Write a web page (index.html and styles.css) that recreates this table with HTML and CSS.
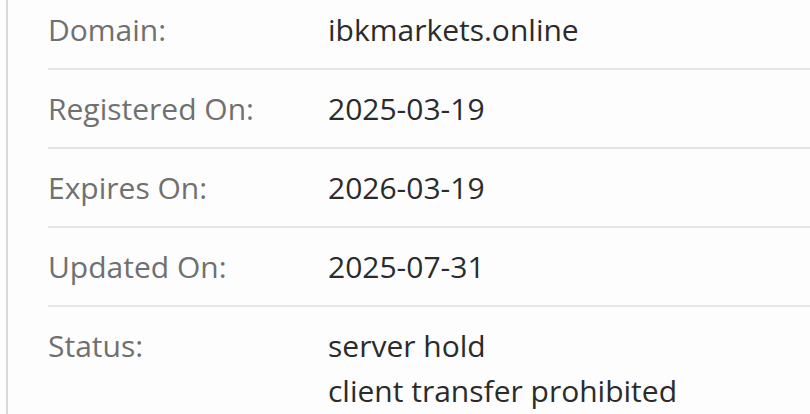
FILE: index.html
```html
<!DOCTYPE html>
<html lang="en">
<head>
<meta charset="utf-8">
<link rel="stylesheet" href="styles.css">
</head>
<body>
<div class="panel">
  <dl class="details">
    <div class="row"><dt>Domain:</dt><dd>ibkmarkets.online</dd></div>
    <div class="row"><dt>Registered On:</dt><dd>2025-03-19</dd></div>
    <div class="row"><dt>Expires On:</dt><dd>2026-03-19</dd></div>
    <div class="row"><dt>Updated On:</dt><dd>2025-07-31</dd></div>
    <div class="row last"><dt>Status:</dt><dd><span class="line">server hold</span><span class="line">client transfer prohibited</span></dd></div>
  </dl>
</div>
</body>
</html>
```

FILE: styles.css
```css
html, body {
  margin: 0;
  padding: 0;
  background: #fdfdfd;
  overflow: hidden;
}
body {
  font-family: "Open Sans", "Liberation Sans", sans-serif;
  font-size: 30px;
  line-height: 45px;
}
.panel {
  margin-left: 6px;
  border-left: 2px solid #d8d8d8;
  min-height: 100vh;
  padding-left: 40px;
  box-sizing: border-box;
}
.details {
  margin: -9px 0 0 0;
}
.row {
  display: grid;
  grid-template-columns: 280px 1fr;
  padding: 16px 0;
  border-bottom: 2px solid #e6e6e6;
}
.row.last {
  border-bottom: none;
}
dt {
  color: #707070;
}
dd {
  margin: 0;
  color: #2b2b2b;
}
.line {
  display: block;
}
```
